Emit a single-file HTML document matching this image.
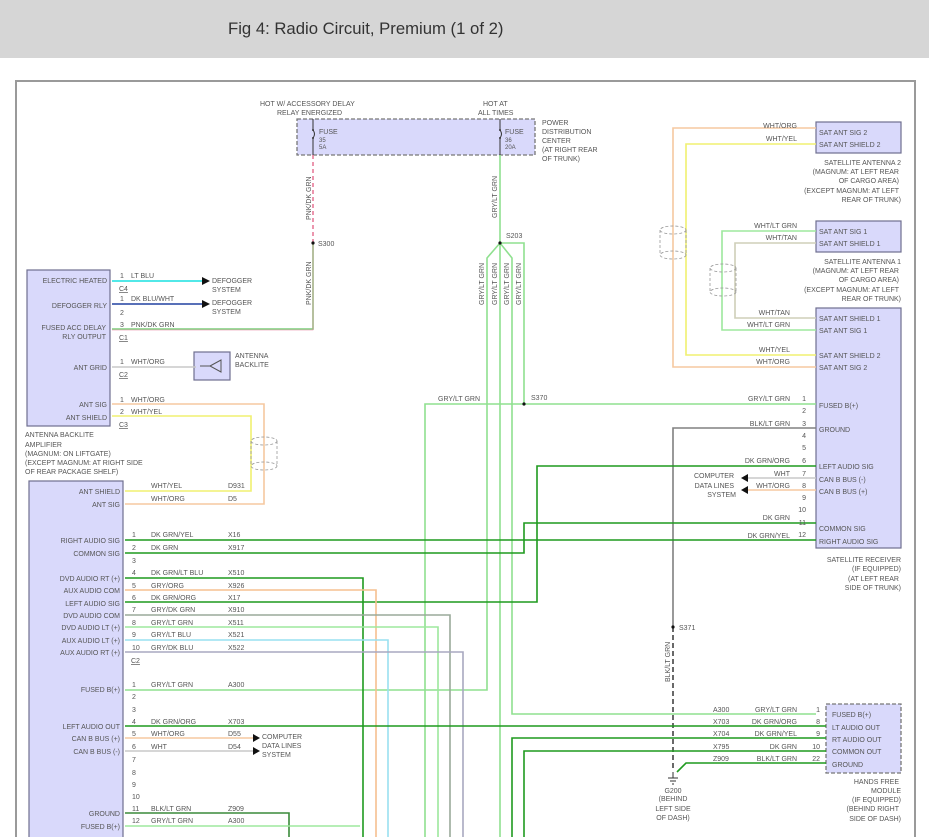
<!DOCTYPE html>
<html><head><meta charset="utf-8"><style>
html,body{margin:0;padding:0;background:#fff;}
body{width:929px;height:837px;overflow:hidden;position:relative;font-family:"Liberation Sans",sans-serif;}
.hdr{position:absolute;left:0;top:0;width:929px;height:58px;background:#d6d6d6;}
.hdr span{position:absolute;left:228px;top:19px;font-size:16.7px;color:#333;}
svg{position:absolute;left:0;top:0;}
text{font-family:"Liberation Sans",sans-serif;font-size:7px;fill:#555;}
</style></head><body>
<div class="hdr"><span>Fig 4: Radio Circuit, Premium (1 of 2)</span></div>
<svg width="929" height="837" viewBox="0 0 929 837">
<path d="M16 837 V81 H915 V837" fill="none" stroke="#9a9a9a" stroke-width="2"/>
<g fill="#d9d9fb" stroke="#6f6f8f" stroke-width="1.2">
<rect x="27" y="270" width="83" height="156"/>
<rect x="29" y="481" width="94" height="360"/>
<rect x="194" y="352" width="36" height="28"/>
<rect x="816" y="122" width="85" height="31"/>
<rect x="816" y="221" width="85" height="31"/>
<rect x="816" y="308" width="85" height="240"/>
</g>
<g fill="#d9d9fb" stroke="#777" stroke-width="1.3" stroke-dasharray="4,2">
<rect x="297" y="119" width="238" height="36"/>
<rect x="826" y="704" width="75" height="69"/>
</g>
<path d="M200 366 H210 M210 366 L221 360 V372 Z" fill="none" stroke="#555"/>
<path d="M313 119 V130 M313 130 q3 4 0 8 M313 138 V155 M500 119 V130 M500 130 q3 4 0 8 M500 138 V155" fill="none" stroke="#333" stroke-width="1"/>
<g fill="#333"><circle cx="313" cy="130" r="1"/><circle cx="313" cy="138" r="1"/><circle cx="500" cy="130" r="1"/><circle cx="500" cy="138" r="1"/></g>
<g fill="none" stroke-width="1.6">
<path d="M313 155 V243" stroke="#e87c9a" stroke-dasharray="4,3"/>
<path d="M313 243 V329 H112" stroke="#7ccf7c"/>
<path d="M313 243 V330 H112" stroke="#e87c9a" stroke-width="0.6"/>
<path d="M112 281 H208" stroke="#19e0e0"/>
<path d="M112 304 H208" stroke="#2040a0"/>
<path d="M112 367 H196" stroke="#c8c8c8"/>
<path d="M112 404 H264 V504 H125" stroke="#f5c8a0"/>
<path d="M112 416 H251 V491 H125" stroke="#f0f070"/>
<path d="M500 155 V243" stroke="#8fe08f"/>
<path d="M500 243 L487 258 V690 H125" stroke="#8fe08f"/>
<path d="M500 243 V837" stroke="#8fe08f"/>
<path d="M500 243 L512 258 V714 H816" stroke="#8fe08f"/>
<path d="M500 243 H524 V404" stroke="#8fe08f"/>
<path d="M425 837 V404 H816" stroke="#8fe08f"/>
<path d="M816 128 H673 V367 H816" stroke="#f5c8a0"/>
<path d="M816 144 H686 V355 H816" stroke="#f0f070"/>
<path d="M816 231 H722 V330 H816" stroke="#9de89d"/>
<path d="M816 243 H735 V318 H816" stroke="#cfcfb8"/>
<path d="M816 428 H673 V627" stroke="#808080"/>
<path d="M673 627 V770" stroke="#444" stroke-dasharray="5,3"/>
<path d="M816 466 H537 V602 H125" stroke="#1f9a1f"/>
<path d="M816 478 H745" stroke="#c8c8c8"/>
<path d="M816 490 H745" stroke="#f5c8a0"/>
<path d="M816 523 H524 V553 H125" stroke="#1f9a1f"/>
<path d="M816 540 H125" stroke="#1f9a1f"/>
<path d="M125 578 H363 V837" stroke="#1f9a1f"/>
<path d="M125 590 H376 V837" stroke="#f5c090"/>
<path d="M125 615 H450 V837" stroke="#9aaa9a"/>
<path d="M125 627 H438 V837" stroke="#9de89d"/>
<path d="M125 640 H388 V837" stroke="#99e0f0"/>
<path d="M125 652 H463 V837" stroke="#a8a8c0"/>
<path d="M125 726 H826" stroke="#1f9a1f"/>
<path d="M125 738 H253" stroke="#f5c8a0"/>
<path d="M125 751 H253" stroke="#c8c8c8"/>
<path d="M826 738 H512 V837" stroke="#1f9a1f"/>
<path d="M826 751 H524 V837" stroke="#1f9a1f"/>
<path d="M826 763 H686 L677 772" stroke="#1f9a1f"/>
<path d="M125 813 H289 V837" stroke="#3a8a3a"/>
<path d="M125 826 H360" stroke="#9de89d"/>
</g>
<g fill="none" stroke="#999" stroke-dasharray="3,2" stroke-width="0.8">
<ellipse cx="264" cy="441" rx="13" ry="4"/><ellipse cx="264" cy="466" rx="13" ry="4"/><path d="M251 441 V466 M277 441 V466"/>
<ellipse cx="673" cy="230" rx="13" ry="4"/><ellipse cx="673" cy="255" rx="13" ry="4"/><path d="M660 230 V255 M686 230 V255"/>
<ellipse cx="723" cy="268" rx="13" ry="4"/><ellipse cx="723" cy="292" rx="13" ry="4"/><path d="M710 268 V292 M736 268 V292"/>
</g>
<g fill="#111">
<path d="M202 277 L210 281 L202 285Z"/><path d="M202 300 L210 304 L202 308Z"/>
<path d="M253 734 L260 738 L253 742Z"/><path d="M253 747 L260 751 L253 755Z"/>
<path d="M748 474 L741 478 L748 482Z"/><path d="M748 486 L741 490 L748 494Z"/>
<circle cx="313" cy="243" r="1.6"/><circle cx="500" cy="243" r="1.6"/><circle cx="524" cy="404" r="1.6"/><circle cx="673" cy="627" r="1.6"/>
</g>
<path d="M668 778 H678 M670 781 H676 M672 784 H674 M673 772 V778" stroke="#333" fill="none"/>
<text x="260" y="106">HOT W/ ACCESSORY DELAY</text><text x="277" y="115">RELAY ENERGIZED</text>
<text x="483" y="106">HOT AT</text><text x="478" y="115">ALL TIMES</text>
<text x="319" y="134">FUSE</text><text x="319" y="142" style="font-size:6px">35</text><text x="319" y="149" style="font-size:6px">5A</text>
<text x="505" y="134">FUSE</text><text x="505" y="142" style="font-size:6px">36</text><text x="505" y="149" style="font-size:6px">20A</text>
<text x="542" y="125">POWER</text><text x="542" y="134">DISTRIBUTION</text><text x="542" y="143">CENTER</text><text x="542" y="152">(AT RIGHT REAR</text><text x="542" y="161">OF TRUNK)</text>
<text transform="translate(311,220) rotate(-90)">PNK/DK GRN</text>
<text transform="translate(311,305) rotate(-90)">PNK/DK GRN</text>
<text transform="translate(497,218) rotate(-90)">GRY/LT GRN</text>
<text x="318" y="246">S300</text><text x="506" y="238">S203</text>
<text transform="translate(484,305) rotate(-90)">GRY/LT GRN</text>
<text transform="translate(497,305) rotate(-90)">GRY/LT GRN</text>
<text transform="translate(509,305) rotate(-90)">GRY/LT GRN</text>
<text transform="translate(521,305) rotate(-90)">GRY/LT GRN</text>
<text x="438" y="401">GRY/LT GRN</text><text x="531" y="400">S370</text>
<g text-anchor="end">
<text x="107" y="283">ELECTRIC HEATED</text><text x="107" y="308">DEFOGGER RLY</text>
<text x="106" y="330">FUSED ACC DELAY</text><text x="106" y="339">RLY OUTPUT</text>
<text x="107" y="370">ANT GRID</text><text x="107" y="407">ANT SIG</text><text x="107" y="420">ANT SHIELD</text>
</g>
<text x="120" y="278">1</text><text x="131" y="278">LT BLU</text><text x="119" y="291" text-decoration="underline">C4</text>
<text x="120" y="301">1</text><text x="131" y="301">DK BLU/WHT</text><text x="120" y="315">2</text>
<text x="120" y="327">3</text><text x="131" y="327">PNK/DK GRN</text><text x="119" y="340" text-decoration="underline">C1</text>
<text x="120" y="364">1</text><text x="131" y="364">WHT/ORG</text><text x="119" y="377" text-decoration="underline">C2</text>
<text x="120" y="402">1</text><text x="131" y="402">WHT/ORG</text><text x="120" y="414">2</text><text x="131" y="414">WHT/YEL</text><text x="119" y="427" text-decoration="underline">C3</text>
<text x="212" y="283">DEFOGGER</text><text x="212" y="292">SYSTEM</text>
<text x="212" y="305">DEFOGGER</text><text x="212" y="314">SYSTEM</text>
<text x="235" y="358">ANTENNA</text><text x="235" y="367">BACKLITE</text>
<text x="25" y="437">ANTENNA BACKLITE</text><text x="25" y="447">AMPLIFIER</text><text x="25" y="456">(MAGNUM: ON LIFTGATE)</text><text x="25" y="465">(EXCEPT MAGNUM: AT RIGHT SIDE</text><text x="25" y="474">OF REAR PACKAGE SHELF)</text>
<g text-anchor="end">
<text x="120" y="494">ANT SHIELD</text><text x="120" y="507">ANT SIG</text>
<text x="120" y="543">RIGHT AUDIO SIG</text><text x="120" y="556">COMMON SIG</text>
<text x="120" y="581">DVD AUDIO RT (+)</text><text x="120" y="593">AUX AUDIO COM</text><text x="120" y="606">LEFT AUDIO SIG</text>
<text x="120" y="618">DVD AUDIO COM</text><text x="120" y="630">DVD AUDIO LT (+)</text><text x="120" y="643">AUX AUDIO LT (+)</text><text x="120" y="655">AUX AUDIO RT (+)</text>
<text x="120" y="692">FUSED B(+)</text><text x="120" y="729">LEFT AUDIO OUT</text><text x="120" y="741">CAN B BUS (+)</text><text x="120" y="754">CAN B BUS (-)</text>
<text x="120" y="816">GROUND</text><text x="120" y="829">FUSED B(+)</text>
</g>
<text x="151" y="488">WHT/YEL</text><text x="228" y="488">D931</text><text x="151" y="501">WHT/ORG</text><text x="228" y="501">D5</text>
<g>
<text x="132" y="537">1</text><text x="151" y="537">DK GRN/YEL</text><text x="228" y="537">X16</text>
<text x="132" y="550">2</text><text x="151" y="550">DK GRN</text><text x="228" y="550">X917</text>
<text x="132" y="563">3</text>
<text x="132" y="575">4</text><text x="151" y="575">DK GRN/LT BLU</text><text x="228" y="575">X510</text>
<text x="132" y="588">5</text><text x="151" y="588">GRY/ORG</text><text x="228" y="588">X926</text>
<text x="132" y="600">6</text><text x="151" y="600">DK GRN/ORG</text><text x="228" y="600">X17</text>
<text x="132" y="612">7</text><text x="151" y="612">GRY/DK GRN</text><text x="228" y="612">X910</text>
<text x="132" y="625">8</text><text x="151" y="625">GRY/LT GRN</text><text x="228" y="625">X511</text>
<text x="132" y="637">9</text><text x="151" y="637">GRY/LT BLU</text><text x="228" y="637">X521</text>
<text x="132" y="650">10</text><text x="151" y="650">GRY/DK BLU</text><text x="228" y="650">X522</text>
<text x="131" y="663" text-decoration="underline">C2</text>
<text x="132" y="687">1</text><text x="151" y="687">GRY/LT GRN</text><text x="228" y="687">A300</text>
<text x="132" y="699">2</text><text x="132" y="712">3</text>
<text x="132" y="724">4</text><text x="151" y="724">DK GRN/ORG</text><text x="228" y="724">X703</text>
<text x="132" y="736">5</text><text x="151" y="736">WHT/ORG</text><text x="228" y="736">D55</text>
<text x="132" y="749">6</text><text x="151" y="749">WHT</text><text x="228" y="749">D54</text>
<text x="132" y="762">7</text><text x="132" y="775">8</text><text x="132" y="787">9</text><text x="132" y="799">10</text>
<text x="132" y="811">11</text><text x="151" y="811">BLK/LT GRN</text><text x="228" y="811">Z909</text>
<text x="132" y="823">12</text><text x="151" y="823">GRY/LT GRN</text><text x="228" y="823">A300</text>
</g>
<text x="262" y="739">COMPUTER</text><text x="262" y="748">DATA LINES</text><text x="262" y="757">SYSTEM</text>
<text x="819" y="135">SAT ANT SIG 2</text><text x="819" y="147">SAT ANT SHIELD 2</text>
<text x="819" y="234">SAT ANT SIG 1</text><text x="819" y="246">SAT ANT SHIELD 1</text>
<text x="819" y="321">SAT ANT SHIELD 1</text><text x="819" y="333">SAT ANT SIG 1</text><text x="819" y="358">SAT ANT SHIELD 2</text><text x="819" y="370">SAT ANT SIG 2</text>
<text x="819" y="408">FUSED B(+)</text><text x="819" y="432">GROUND</text><text x="819" y="469">LEFT AUDIO SIG</text><text x="819" y="482">CAN B BUS (-)</text><text x="819" y="494">CAN B BUS (+)</text><text x="819" y="531">COMMON SIG</text><text x="819" y="544">RIGHT AUDIO SIG</text>
<text x="832" y="717">FUSED B(+)</text><text x="832" y="730">LT AUDIO OUT</text><text x="832" y="742">RT AUDIO OUT</text><text x="832" y="754">COMMON OUT</text><text x="832" y="767">GROUND</text>
<g text-anchor="end">
<text x="797" y="128">WHT/ORG</text><text x="797" y="141">WHT/YEL</text>
<text x="901" y="165">SATELLITE ANTENNA 2</text><text x="899" y="174">(MAGNUM: AT LEFT REAR</text><text x="899" y="183">OF CARGO AREA)</text><text x="899" y="193">(EXCEPT MAGNUM: AT LEFT</text><text x="901" y="202">REAR OF TRUNK)</text>
<text x="797" y="228">WHT/LT GRN</text><text x="797" y="240">WHT/TAN</text>
<text x="901" y="264">SATELLITE ANTENNA 1</text><text x="899" y="273">(MAGNUM: AT LEFT REAR</text><text x="899" y="282">OF CARGO AREA)</text><text x="899" y="292">(EXCEPT MAGNUM: AT LEFT</text><text x="901" y="301">REAR OF TRUNK)</text>
<text x="790" y="315">WHT/TAN</text><text x="790" y="327">WHT/LT GRN</text><text x="790" y="352">WHT/YEL</text><text x="790" y="364">WHT/ORG</text>
<text x="790" y="401">GRY/LT GRN</text><text x="790" y="426">BLK/LT GRN</text><text x="790" y="463">DK GRN/ORG</text><text x="790" y="476">WHT</text><text x="790" y="488">WHT/ORG</text><text x="790" y="520">DK GRN</text><text x="790" y="538">DK GRN/YEL</text>
<text x="806" y="401">1</text><text x="806" y="413">2</text><text x="806" y="426">3</text><text x="806" y="438">4</text><text x="806" y="450">5</text><text x="806" y="463">6</text><text x="806" y="476">7</text><text x="806" y="488">8</text><text x="806" y="500">9</text><text x="806" y="512">10</text><text x="806" y="525">11</text><text x="806" y="537">12</text>
<text x="734" y="478">COMPUTER</text><text x="734" y="488">DATA LINES</text><text x="736" y="497">SYSTEM</text>
<text x="901" y="562">SATELLITE RECEIVER</text><text x="901" y="571">(IF EQUIPPED)</text><text x="899" y="581">(AT LEFT REAR</text><text x="901" y="590">SIDE OF TRUNK)</text>
<text x="797" y="712">GRY/LT GRN</text><text x="797" y="724">DK GRN/ORG</text><text x="797" y="736">DK GRN/YEL</text><text x="797" y="749">DK GRN</text><text x="797" y="761">BLK/LT GRN</text>
<text x="820" y="712">1</text><text x="820" y="724">8</text><text x="820" y="736">9</text><text x="820" y="749">10</text><text x="820" y="761">22</text>
<text x="899" y="784">HANDS FREE</text><text x="901" y="793">MODULE</text><text x="901" y="802">(IF EQUIPPED)</text><text x="899" y="811">(BEHIND RIGHT</text><text x="901" y="821">SIDE OF DASH)</text>
</g>
<text x="713" y="712">A300</text><text x="713" y="724">X703</text><text x="713" y="736">X704</text><text x="713" y="749">X795</text><text x="713" y="761">Z909</text>
<text x="679" y="630">S371</text>
<text transform="translate(670,682) rotate(-90)">BLK/LT GRN</text>
<g text-anchor="middle"><text x="673" y="793">G200</text><text x="673" y="801">(BEHIND</text><text x="673" y="811">LEFT SIDE</text><text x="673" y="820">OF DASH)</text></g>
</svg>
</body></html>
